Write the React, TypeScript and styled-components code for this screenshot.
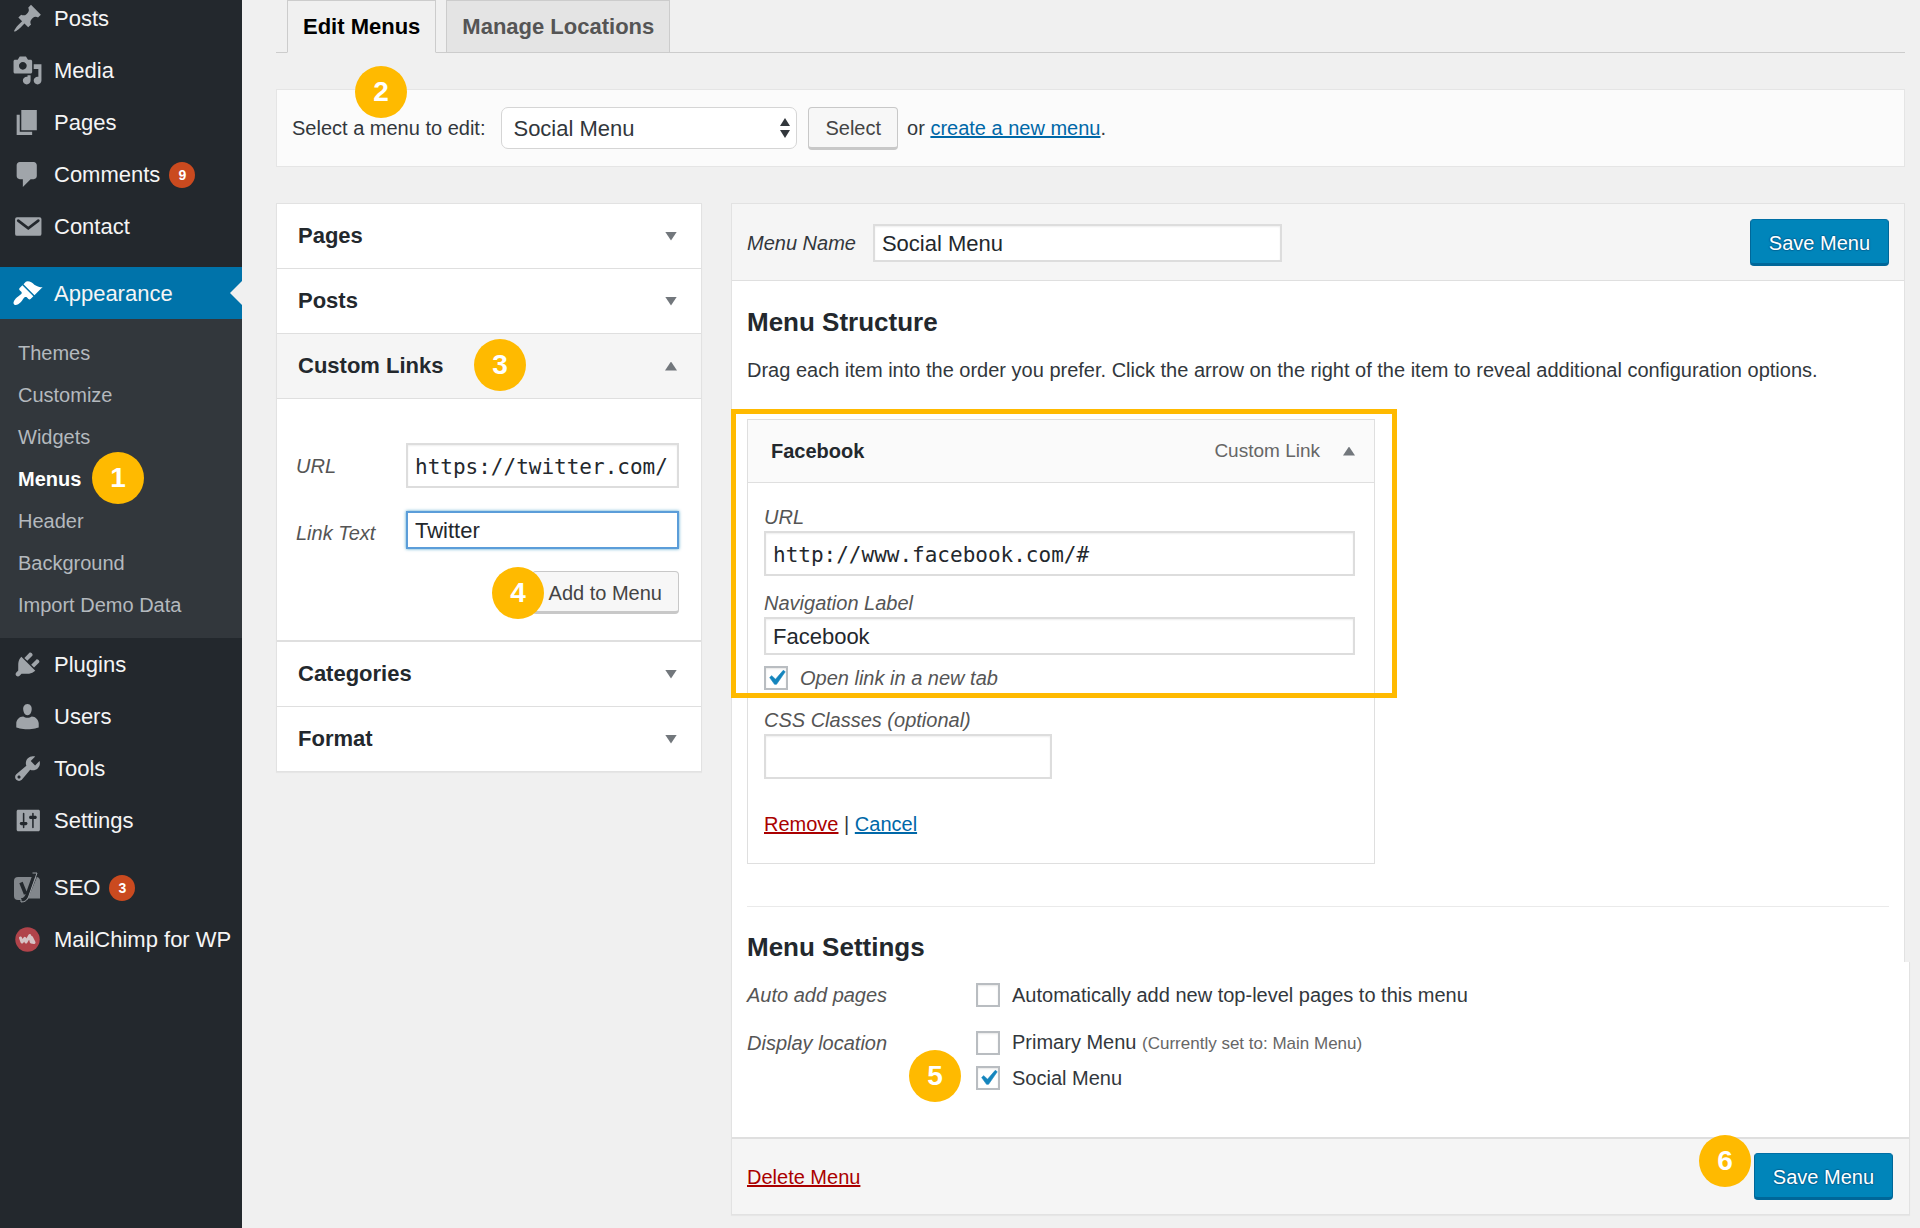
import React from 'react';
import styled, { createGlobalStyle, css } from 'styled-components';

const sans = '"Liberation Sans", Arial, Helvetica, sans-serif';
const mono = '"DejaVu Sans Mono", monospace';

const GlobalStyle = createGlobalStyle`
  *, *::before, *::after { box-sizing: border-box; }
  body { margin: 0; background: #f0f0f0; overflow-x: hidden; }
  body, button, input, select { font-family: ${sans}; }
  h2, h3, p, ul { margin: 0; padding: 0; }
`;

/* ---------- shell ---------- */

const Page = styled.div`
  display: flex;
  min-height: 100vh;
  color: #32373c;
  font-size: 20px;
  line-height: 24px;
`;

const Sidebar = styled.nav`
  flex: 0 0 242px;
  background: #23282d;
  overflow: hidden;
`;

const MenuList = styled.ul`
  list-style: none;
`;

/* The admin menu is scrolled: its first entry starts just above the window. */
const ScrolledMenu = styled(MenuList)`
  margin-top: -8px;
`;

const MenuSeparator = styled.li`
  height: 15px;
`;

const MenuLink = styled.a<{ $active?: boolean }>`
  position: relative;
  display: flex;
  align-items: center;
  gap: 9px;
  height: 52px;
  padding-top: 1px;
  padding-left: 12px;
  font-size: 22px;
  white-space: nowrap;
  text-decoration: none;
  color: #f5f5f5;
  background: ${p => (p.$active ? '#0073aa' : 'transparent')};

  svg {
    flex: none;
    width: 31px;
    height: 31px;
    margin-right: 2px;
    fill: ${p => (p.$active ? '#fff' : '#a0a5aa')};
  }

  ${p =>
    p.$active &&
    css`
      &::after {
        content: '';
        position: absolute;
        right: 0;
        top: 14px;
        border: 12px solid transparent;
        border-left-width: 0;
        border-right-color: #f0f0f0;
      }
    `}
`;

const Count = styled.span`
  width: 26px;
  height: 26px;
  border-radius: 13px;
  background: #ca4a1f;
  color: #fff;
  font-size: 14px;
  font-weight: 700;
  line-height: 26px;
  text-align: center;
`;

const SubMenu = styled(MenuList)`
  padding: 13px 0 12px;
  background: #32373c;
`;

const SubItem = styled.li`
  position: relative;
`;

const SubLink = styled.a<{ $current?: boolean }>`
  display: block;
  padding-left: 18px;
  line-height: 42px;
  text-decoration: none;
  color: ${p => (p.$current ? '#fff' : '#b4b9be')};
  font-weight: ${p => (p.$current ? 700 : 400)};
`;

const Content = styled.main`
  flex: 1;
  min-width: 0;
  padding: 0 15px 13px 34px;
`;

/* ---------- numbered markers ---------- */

const Step = styled.span<{ $left?: number; $right?: number; $top: number }>`
  position: absolute;
  z-index: 2;
  top: ${p => p.$top}px;
  ${p => (p.$left !== undefined ? `left: ${p.$left}px;` : '')}
  ${p => (p.$right !== undefined ? `right: ${p.$right}px;` : '')}
  width: 52px;
  height: 52px;
  border-radius: 50%;
  background: #ffba00;
  color: #fff;
  font-size: 28px;
  font-weight: 700;
  font-style: normal;
  line-height: 51px;
  text-align: center;
  pointer-events: none;
`;

/* ---------- shared controls ---------- */

const TextInput = styled.input<{ $code?: boolean; $focused?: boolean }>`
  width: 100%;
  height: ${p => (p.$code ? 45 : 38)}px;
  padding: 2px 7px 0;
  border: 2px solid ${p => (p.$focused ? '#5b9dd9' : '#dddddd')};
  border-radius: 0;
  outline: none;
  background: #fff;
  box-shadow: ${p =>
    p.$focused ? '0 0 3px rgba(30, 140, 190, 0.8)' : 'inset 0 1px 2px rgba(0, 0, 0, 0.07)'};
  color: #23282d;
  font-family: ${p => (p.$code ? mono : sans)};
  font-size: ${p => (p.$code ? 21 : 22)}px;
`;

const Button = styled.button`
  height: 43px;
  padding: 2px 16px 0;
  border: 1px solid #c8c8c8;
  border-bottom: 3px solid #c8c8c8;
  border-radius: 4px;
  background: #f7f7f7;
  color: #444;
  font-size: 20px;
  line-height: 24px;
  white-space: nowrap;
  cursor: pointer;
`;

const PrimaryButton = styled(Button)`
  height: 47px;
  padding: 2px 18px 0;
  border-color: #006fa5 #006799 #006799;
  background: #0085ba;
  color: #fff;
  text-shadow: 0 -1px 1px #006799, 1px 0 1px #006799, 0 1px 1px #006799, -1px 0 1px #006799;
`;

const Link = styled.a<{ $danger?: boolean }>`
  color: ${p => (p.$danger ? '#a00' : '#0068a8')};
  text-decoration: underline;
`;

const Label = styled.label`
  color: #555;
  font-style: italic;
`;

const CheckBox = styled.span`
  position: relative;
  flex: none;
  width: 24px;
  height: 24px;

  input {
    display: block;
    appearance: none;
    width: 24px;
    height: 24px;
    margin: 0;
    border: 2px solid #b9bdc1;
    background: #fff;
    box-shadow: inset 0 1px 2px rgba(0, 0, 0, 0.1);
  }

  svg {
    position: absolute;
    inset: -3px;
    width: 30px;
    height: 30px;
    fill: #1485bd;
    stroke: #1485bd;
    stroke-width: 0.4;
    pointer-events: none;
    visibility: hidden;
  }

  input:checked + svg {
    visibility: visible;
  }
`;

const CheckLabel = styled.label<{ $italic?: boolean }>`
  display: flex;
  align-items: center;
  gap: 12px;
  height: 24px;
  font-style: ${p => (p.$italic ? 'italic' : 'normal')};
  color: ${p => (p.$italic ? '#555' : '#32373c')};
`;

const Note = styled.small`
  font-size: 17px;
  color: #666;
`;

const Arrow = styled.span<{ $up?: boolean }>`
  flex: none;
  width: 12px;
  height: 9px;
  background: #72777c;
  clip-path: ${p =>
    p.$up ? 'polygon(0 100%, 100% 100%, 50% 0)' : 'polygon(0 0, 100% 0, 50% 100%)'};
`;

/* ---------- tabs and menu picker ---------- */

const Tabs = styled.div`
  display: flex;
  gap: 10px;
  height: 53px;
  padding-left: 11px;
  border-bottom: 1px solid #ccc;
`;

const Tab = styled.a<{ $active?: boolean }>`
  height: 53px;
  padding: 0 15px;
  border: 1px solid #ccc;
  border-bottom-color: ${p => (p.$active ? '#f0f0f0' : '#ccc')};
  background: ${p => (p.$active ? '#f0f0f0' : '#e4e4e4')};
  color: ${p => (p.$active ? '#000' : '#555')};
  font-size: 22px;
  font-weight: 700;
  line-height: 52px;
  text-decoration: none;
  white-space: nowrap;
`;

const Picker = styled.form`
  position: relative;
  display: flex;
  align-items: center;
  height: 78px;
  margin-top: 36px;
  padding: 0 15px;
  border: 1px solid #e5e5e5;
  background: #fbfbfb;
`;

const SelectWrap = styled.span`
  position: relative;
  width: 296px;
  margin: 0 11px 0 16px;

  select {
    display: block;
    appearance: none;
    width: 100%;
    height: 42px;
    padding: 0 36px 0 11px;
    border: 1px solid #d5d5d5;
    border-radius: 7px;
    background: #fff;
    color: #32373c;
    font-size: 22px;
  }

  svg {
    position: absolute;
    right: 7px;
    top: 11px;
    width: 10px;
    height: 20px;
    fill: #32373c;
    pointer-events: none;
  }
`;

const PickerNote = styled.span`
  margin-left: 9px;
`;

/* ---------- columns ---------- */

const Columns = styled.div`
  display: grid;
  grid-template-columns: 426px minmax(0, 1fr);
  gap: 29px;
  align-items: start;
  margin-top: 36px;
`;

const Accordion = styled.section`
  border: 1px solid #e2e2e2;
  background: #fff;
  box-shadow: 0 1px 1px rgba(0, 0, 0, 0.04);
`;

const Section = styled.div`
  & + & {
    border-top: 1px solid #dfdfdf;
  }
`;

const SectionTitle = styled.h3`
  position: relative;
  font-size: 22px;
`;

const SectionToggle = styled.button<{ $open?: boolean }>`
  display: flex;
  align-items: center;
  justify-content: space-between;
  width: 100%;
  height: 64px;
  padding: 0 24px 0 21px;
  border: 0;
  background: ${p => (p.$open ? '#f5f5f5' : '#fff')};
  color: #23282d;
  font: inherit;
  cursor: pointer;
`;

const SectionBody = styled.div`
  display: grid;
  grid-template-columns: 110px 1fr;
  align-items: center;
  padding: 44px 22px 26px 19px;
  border-top: 1px solid #dfdfdf;
  border-bottom: 1px solid #dfdfdf;
`;

const LinkTextField = styled.div`
  margin-top: 23px;
`;

const LinkTextLabel = styled(Label)`
  margin-top: 28px;
`;

const AddRow = styled.div`
  position: relative;
  grid-column: 1 / -1;
  display: flex;
  justify-content: flex-end;
  margin-top: 22px;
`;

/* ---------- menu editor ---------- */

const Editor = styled.form`
  display: block;
`;

const EditorTop = styled.div`
  border: 1px solid #e2e2e2;
  border-bottom: 0;
  background: #fff;
`;

const EditorHeader = styled.header`
  display: flex;
  align-items: center;
  gap: 17px;
  height: 77px;
  padding: 1px 15px 0;
  border-bottom: 1px solid #dfdfdf;
  background: #f5f5f5;

  label { color: #32373c; }
  button { margin-left: auto; }
`;

const NameField = styled.div`
  width: 409px;
`;

const Structure = styled.div`
  padding: 26px 15px 0;
`;

const Heading = styled.h2`
  color: #23282d;
  font-size: 26px;
  line-height: 30px;
`;

const Intro = styled.p`
  margin: 18px 0 34px;
  line-height: 30px;
`;

const Item = styled.article`
  position: relative;
  max-width: 628px;
  border: 1px solid #dfdfdf;
`;

const Highlight = styled.div`
  position: absolute;
  z-index: 1;
  top: -11px;
  left: -17px;
  right: -23px;
  height: 289px;
  border: 5px solid #ffba00;
  pointer-events: none;
`;

const ItemHeader = styled.header`
  display: flex;
  align-items: center;
  height: 63px;
  padding: 0 19px 0 23px;
  border-bottom: 1px solid #dfdfdf;
  background: #fafafa;
`;

const ItemTitle = styled.h3`
  margin-right: auto;
  color: #23282d;
  font-size: 20px;
`;

const ItemType = styled.span`
  margin-right: 23px;
  color: #666;
  font-size: 19px;
`;

const ItemBody = styled.div`
  padding: 22px 19px 27px 16px;
`;

const Field = styled.div<{ $narrow?: boolean }>`
  display: flex;
  flex-direction: column;
  gap: 2px;
  width: ${p => (p.$narrow ? '288px' : 'auto')};
`;

const ItemFields = styled.div`
  display: flex;
  flex-direction: column;
  gap: 15px;
  margin-bottom: 11px;
`;

const CssField = styled(Field)`
  margin: 18px 0 33px;
`;

const Rule = styled.hr`
  margin: 42px 0 25px;
  border: 0;
  border-top: 1px solid #eaeaea;
`;

const EditorBottom = styled.div`
  margin-right: -5px;
  border: 1px solid #e2e2e2;
  border-top: 0;
  background: #fff;
  box-shadow: 0 1px 1px rgba(0, 0, 0, 0.04);
`;

const Settings = styled.div`
  display: flex;
  flex-direction: column;
  gap: 24px;
  padding: 21px 15px 47px;
`;

const Setting = styled.fieldset`
  position: relative;
  display: grid;
  grid-template-columns: 229px 1fr;
  margin: 0;
  padding: 0;
  border: 0;
`;

const SettingName = styled.span`
  color: #555;
  font-style: italic;
`;

const Choices = styled.div`
  display: flex;
  flex-direction: column;
  gap: 11px;
`;

const EditorFooter = styled.footer`
  position: relative;
  display: flex;
  align-items: center;
  justify-content: space-between;
  height: 77px;
  padding: 0 16px 0 15px;
  border-top: 2px solid #dfdfdf;
  background: #f5f5f5;
`;

/* ---------- icons ---------- */

const paths = {
  posts:
    'M10.44 3.02l1.82-1.82 6.36 6.35-1.83 1.82c-1.05-.68-2.48-.57-3.41.36l-.75.75c-.92.93-1.04 2.35-.35 3.41l-1.83 1.82-2.41-2.41-2.8 2.79c-.42.42-3.38 2.71-3.8 2.29s1.86-3.39 2.28-3.81l2.79-2.79L4.1 9.36l1.83-1.82c1.05.69 2.48.57 3.4-.36l.75-.75c.93-.92 1.05-2.35.36-3.41z',
  media:
    'M13 11V4c0-.55-.45-1-1-1h-1.67L9 1H5L3.67 3H2c-.55 0-1 .45-1 1v7c0 .55.45 1 1 1h10c.55 0 1-.45 1-1zM7 4.5c1.38 0 2.5 1.12 2.5 2.5S8.38 9.5 7 9.5 4.5 8.38 4.5 7 5.62 4.5 7 4.5zM14 6h5v10.5c0 1.38-1.12 2.5-2.5 2.5S14 17.88 14 16.5s1.12-2.5 2.5-2.5c.17 0 .34.02.5.05V9h-3V6zm-4 8.05V13h2v3.5c0 1.38-1.12 2.5-2.5 2.5S7 17.88 7 16.5 8.12 14 9.5 14c.17 0 .34.02.5.05z',
  pages: 'M6 15V2h10v13H6zm-1 1h8v2H3V5h2v11z',
  comments:
    'M5 2h9c1.1 0 2 .9 2 2v7c0 1.1-.9 2-2 2h-2l-5 5v-5H5c-1.1 0-2-.9-2-2V4c0-1.1.9-2 2-2z',
  appearance:
    'M14.48 11.06L7.41 3.99l1.5-1.5c.5-.56 2.3-.47 3.51.32 1.21.8 1.43 1.28 2.91 2.1 1.18.64 2.45 1.26 4.45.85zm-.71.71L6.7 4.7 4.93 6.47c-.39.39-.39 1.02 0 1.41l1.06 1.06c.39.39.39 1.03 0 1.42-.6.6-1.43 1.11-2.21 1.69-.35.26-.7.53-1.01.84C1.43 14.23.4 16.08 1.4 17.07c.99 1 2.84-.03 4.18-1.36.31-.31.58-.66.85-1.02.57-.78 1.08-1.61 1.69-2.21.39-.39 1.02-.39 1.41 0l1.06 1.06c.39.39 1.02.39 1.41 0z',
  plugins:
    'M13.11 4.36L9.87 7.6 8 5.73l3.24-3.24c.35-.34 1.05-.2 1.56.32.52.51.66 1.21.31 1.55zm-8 1.77l.91-1.12 9.01 9.01-1.19.84c-.71.71-2.63 1.16-3.82 1.16H6.14L4.9 17.26c-.59.59-1.54.59-2.12 0-.59-.58-.59-1.53 0-2.12l1.24-1.24v-3.88c0-1.13.4-3.19 1.09-3.89zm7.26 3.97l3.24-3.24c.34-.35 1.04-.21 1.55.31.52.51.66 1.21.31 1.55l-3.24 3.25z',
  users:
    'M10 9.25c-2.27 0-2.73-3.44-2.73-3.44C7 4.02 7.82 2 9.97 2c2.16 0 2.98 2.02 2.71 3.81 0 0-.41 3.44-2.68 3.44zm0 1.6c1.1 0 2-.3 2.72-.85 2.39 0 4.52 2.33 4.52 4.53v2.49s-3.65 1.13-7.24 1.13c-3.65 0-7.24-1.13-7.24-1.13v-2.49c0-2.25 1.94-4.48 4.47-4.48.8.55 1.700.8 2.770.8z',
  tools:
    'M16.68 9.77c-1.34 1.34-3.3 1.67-4.95.99l-5.41 6.52c-.99.99-2.59.99-3.58 0s-.99-2.59 0-3.57l6.52-5.42c-.68-1.65-.35-3.61.99-4.95 1.28-1.28 3.12-1.62 4.72-1.06l-2.89 2.89 2.82 2.82 2.86-2.87c.53 1.58.18 3.39-1.08 4.65zM3.81 16.21c.4.39 1.04.39 1.43 0 .4-.4.4-1.04 0-1.43-.39-.4-1.03-.4-1.43 0-.39.39-.39 1.03 0 1.43z',
  settings:
    'M18 16V4c0-.55-.45-1-1-1H4c-.55 0-1 .45-1 1v12c0 .55.45 1 1 1h13c.55 0 1-.45 1-1zM8 11h1c.55 0 1 .45 1 1s-.45 1-1 1H8v1.5c0 .28-.22.5-.5.5s-.5-.22-.5-.5V13H6c-.55 0-1-.45-1-1s.45-1 1-1h1V5.5c0-.28.22-.5.5-.5s.5.22.5.5V11zm5-2h-1c-.55 0-1-.45-1-1s.45-1 1-1h1V5.5c0-.28.22-.5.5-.5s.5.22.5.5V7h1c.55 0 1 .45 1 1s-.45 1-1 1h-1v5.5c0 .28-.22.5-.5.5s-.5-.22-.5-.5V9z',
};

const Dash = ({ name }: { name: keyof typeof paths }) => (
  <svg viewBox="0 0 20 20" aria-hidden="true">
    <path d={paths[name]} />
  </svg>
);

const Envelope = () => (
  <svg viewBox="0 0 20 20" aria-hidden="true">
    <rect x="2" y="4" width="17" height="12" rx="1.2" />
    <path d="M4 6.2l6.500 5L17 6.200" fill="none" stroke="#23282d" strokeWidth="1.7" strokeLinecap="round" />
  </svg>
);

const Yoast = () => (
  <svg viewBox="0 0 31 31" aria-hidden="true">
    <path fill="#82878c" d="M6 5h18.5L15 28H6a4 4 0 0 1-4-4V9a4 4 0 0 1 4-4z" />
    <path fill="#82878c" d="M25 5c2 .6 3 2 3 4v17.5H16z" />
    <path
      fill="none"
      stroke="#23282d"
      strokeWidth="3.600"
      d="M9 10.500l4.600 11.500M22.800 1.500L15 23.500c-1.100 2.900-2.800 4.300-5.800 4.300"
    />
    <path
      fill="none"
      stroke="#9a9fa4"
      strokeWidth="1"
      d="M20.500 1h4.500L16.500 25c-1.200 3.200-3.200 5-7.500 5v-2.600"
    />
  </svg>
);

const MailChimp = () => (
  <svg viewBox="0 0 31 31" aria-hidden="true">
    <circle cx="15.5" cy="15.5" r="12.2" fill="#b0434a" />
    <path
      fill="none"
      stroke="#d6c3c5"
      strokeWidth="3"
      strokeLinejoin="round"
      strokeLinecap="round"
      d="M8.500 14l1.500 4 2.800-3.600 1.200 3.600 3.800-6.500 1.400 6.500 2.800.5-2.500-5"
    />
  </svg>
);

/* ---------- parts ---------- */

type Entry = { label: string; icon: React.ReactNode; count?: number; active?: boolean };

const contentEntries: Entry[] = [
  { label: 'Posts', icon: <Dash name="posts" /> },
  { label: 'Media', icon: <Dash name="media" /> },
  { label: 'Pages', icon: <Dash name="pages" /> },
  { label: 'Comments', icon: <Dash name="comments" />, count: 9 },
  { label: 'Contact', icon: <Envelope /> },
];

const adminEntries: Entry[] = [
  { label: 'Plugins', icon: <Dash name="plugins" /> },
  { label: 'Users', icon: <Dash name="users" /> },
  { label: 'Tools', icon: <Dash name="tools" /> },
  { label: 'Settings', icon: <Dash name="settings" /> },
];

const pluginEntries: Entry[] = [
  { label: 'SEO', icon: <Yoast />, count: 3 },
  { label: 'MailChimp for WP', icon: <MailChimp /> },
];

const appearanceLinks = ['Themes', 'Customize', 'Widgets', 'Menus', 'Header', 'Background', 'Import Demo Data'];

const MenuEntry = ({ label, icon, count, active }: Entry) => (
  <MenuLink href="#" $active={active}>
    {icon}
    {label}
    {count !== undefined && <Count>{count}</Count>}
  </MenuLink>
);

const MenuEntries = ({ entries }: { entries: Entry[] }) => (
  <>
    {entries.map(entry => (
      <li key={entry.label}>
        <MenuEntry {...entry} />
      </li>
    ))}
  </>
);

type CheckProps = { children: React.ReactNode; checked?: boolean; italic?: boolean };

const Check = ({ children, checked, italic }: CheckProps) => (
  <CheckLabel $italic={italic}>
    <CheckBox>
      <input type="checkbox" defaultChecked={checked} />
      <svg viewBox="0 0 20 20" aria-hidden="true">
        <path d="M14.83 4.89l1.34.94-5.81 8.38H9.02L5.78 9.67l1.34-1.25 2.57 2.4z" />
      </svg>
    </CheckBox>
    <span>{children}</span>
  </CheckLabel>
);

type PanelProps = { title: string; marker?: React.ReactNode; children?: React.ReactNode };

const Panel = ({ title, marker, children }: PanelProps) => {
  const open = Boolean(children);
  return (
    <Section>
      <SectionTitle>
        <SectionToggle type="button" $open={open} aria-expanded={open}>
          {title}
          <Arrow $up={open} />
        </SectionToggle>
        {marker}
      </SectionTitle>
      {children}
    </Section>
  );
};

export default function App() {
  return (
    <Page>
      <GlobalStyle />
      <Sidebar aria-label="Admin menu">
        <ScrolledMenu>
          <MenuEntries entries={contentEntries} />
          <MenuSeparator role="separator" />
          <li>
            <MenuEntry label="Appearance" icon={<Dash name="appearance" />} active />
            <SubMenu>
              {appearanceLinks.map(label => (
                <SubItem key={label}>
                  <SubLink href="#" $current={label === 'Menus'}>
                    {label}
                  </SubLink>
                  {label === 'Menus' && (
                    <Step $left={92} $top={-6}>
                      1
                    </Step>
                  )}
                </SubItem>
              ))}
            </SubMenu>
          </li>
          <MenuEntries entries={adminEntries} />
          <MenuSeparator role="separator" />
          <MenuEntries entries={pluginEntries} />
        </ScrolledMenu>
      </Sidebar>

      <Content>
        <Tabs>
          <Tab href="#" $active>
            Edit Menus
          </Tab>
          <Tab href="#">Manage Locations</Tab>
        </Tabs>

        <Picker>
          <Step $left={78} $top={-24}>
            2
          </Step>
          <label htmlFor="menu-select">Select a menu to edit:</label>
          <SelectWrap>
            <select id="menu-select" defaultValue="social">
              <option value="social">Social Menu</option>
              <option value="main">Main Menu</option>
            </select>
            <svg viewBox="0 0 10 20" aria-hidden="true">
              <path d="M5 0l5 8H0zM5 20l5-8H0z" />
            </svg>
          </SelectWrap>
          <Button type="button">Select</Button>
          <PickerNote>
            or <Link href="#">create a new menu</Link>.
          </PickerNote>
        </Picker>

        <Columns>
          <Accordion>
            <Panel title="Pages" />
            <Panel title="Posts" />
            <Panel
              title="Custom Links"
              marker={
                <Step $left={197} $top={5}>
                  3
                </Step>
              }
            >
              <SectionBody>
                <Label htmlFor="link-url">URL</Label>
                <TextInput id="link-url" $code defaultValue="https://twitter.com/" />
                <LinkTextLabel htmlFor="link-text">Link Text</LinkTextLabel>
                <LinkTextField>
                  <TextInput id="link-text" $focused defaultValue="Twitter" />
                </LinkTextField>
                <AddRow>
                  <Step $right={135} $top={-4}>
                    4
                  </Step>
                  <Button type="button">Add to Menu</Button>
                </AddRow>
              </SectionBody>
            </Panel>
            <Panel title="Categories" />
            <Panel title="Format" />
          </Accordion>

          <Editor>
            <EditorTop>
              <EditorHeader>
                <Label htmlFor="menu-name">Menu Name</Label>
                <NameField>
                  <TextInput id="menu-name" defaultValue="Social Menu" />
                </NameField>
                <PrimaryButton type="button">Save Menu</PrimaryButton>
              </EditorHeader>

              <Structure>
                <Heading>Menu Structure</Heading>
                <Intro>
                  Drag each item into the order you prefer. Click the arrow on the right of the item to reveal
                  additional configuration options.
                </Intro>

                <Item>
                  <Highlight />
                  <ItemHeader>
                    <ItemTitle>Facebook</ItemTitle>
                    <ItemType>Custom Link</ItemType>
                    <Arrow $up />
                  </ItemHeader>
                  <ItemBody>
                    <ItemFields>
                      <Field>
                        <Label htmlFor="item-url">URL</Label>
                        <TextInput id="item-url" $code defaultValue="http://www.facebook.com/#" />
                      </Field>
                      <Field>
                        <Label htmlFor="item-label">Navigation Label</Label>
                        <TextInput id="item-label" defaultValue="Facebook" />
                      </Field>
                    </ItemFields>
                    <Check checked italic>
                      Open link in a new tab
                    </Check>
                    <CssField $narrow>
                      <Label htmlFor="item-classes">CSS Classes (optional)</Label>
                      <TextInput id="item-classes" $code />
                    </CssField>
                    <p>
                      <Link href="#" $danger>
                        Remove
                      </Link>{' '}
                      |{' '}
                      <Link href="#">Cancel</Link>
                    </p>
                  </ItemBody>
                </Item>

                <Rule />
                <Heading>Menu Settings</Heading>
              </Structure>
            </EditorTop>

            <EditorBottom>
              <Settings>
                <Setting aria-label="Auto add pages">
                  <SettingName>Auto add pages</SettingName>
                  <Check>Automatically add new top-level pages to this menu</Check>
                </Setting>
                <Setting aria-label="Display location">
                  <SettingName>Display location</SettingName>
                  <Step $left={162} $top={19}>
                    5
                  </Step>
                  <Choices>
                    <Check>
                      Primary Menu <Note>(Currently set to: Main Menu)</Note>
                    </Check>
                    <Check checked>Social Menu</Check>
                  </Choices>
                </Setting>
              </Settings>
              <EditorFooter>
                <Link href="#" $danger>
                  Delete Menu
                </Link>
                <Step $right={158} $top={-4}>
                  6
                </Step>
                <PrimaryButton type="button">Save Menu</PrimaryButton>
              </EditorFooter>
            </EditorBottom>
          </Editor>
        </Columns>
      </Content>
    </Page>
  );
}
